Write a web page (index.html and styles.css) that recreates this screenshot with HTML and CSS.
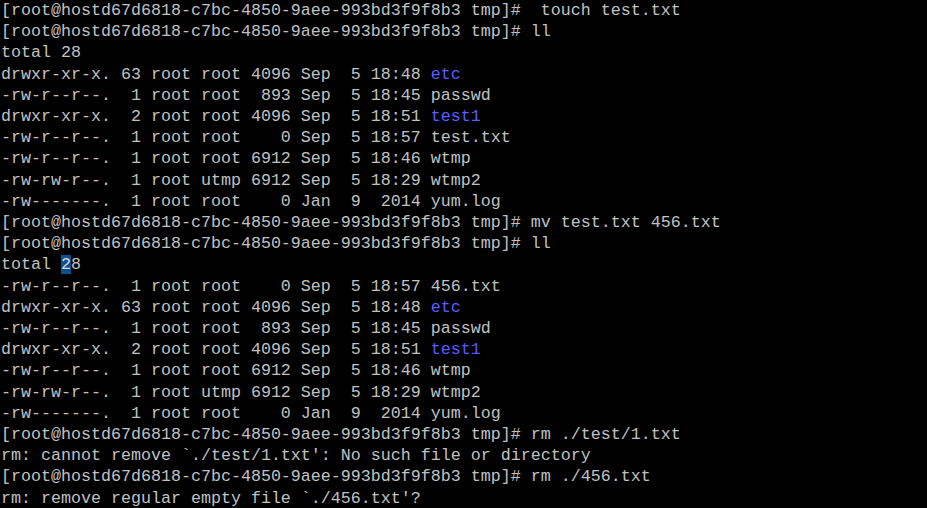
FILE: index.html
```html
<!DOCTYPE html>
<html>
<head>
<meta charset="utf-8">
<link rel="stylesheet" href="styles.css">
</head>
<body>
<pre class="term">[root@hostd67d6818-c7bc-4850-9aee-993bd3f9f8b3 tmp]#  touch test.txt
[root@hostd67d6818-c7bc-4850-9aee-993bd3f9f8b3 tmp]# ll
total 28
drwxr-xr-x. 63 root root 4096 Sep  5 18:48 <span class="dir">etc</span>
-rw-r--r--.  1 root root  893 Sep  5 18:45 passwd
drwxr-xr-x.  2 root root 4096 Sep  5 18:51 <span class="dir">test1</span>
-rw-r--r--.  1 root root    0 Sep  5 18:57 test.txt
-rw-r--r--.  1 root root 6912 Sep  5 18:46 wtmp
-rw-rw-r--.  1 root utmp 6912 Sep  5 18:29 wtmp2
-rw-------.  1 root root    0 Jan  9  2014 yum.log
[root@hostd67d6818-c7bc-4850-9aee-993bd3f9f8b3 tmp]# mv test.txt 456.txt
[root@hostd67d6818-c7bc-4850-9aee-993bd3f9f8b3 tmp]# ll
total <span class="sel">2</span>8
-rw-r--r--.  1 root root    0 Sep  5 18:57 456.txt
drwxr-xr-x. 63 root root 4096 Sep  5 18:48 <span class="dir">etc</span>
-rw-r--r--.  1 root root  893 Sep  5 18:45 passwd
drwxr-xr-x.  2 root root 4096 Sep  5 18:51 <span class="dir">test1</span>
-rw-r--r--.  1 root root 6912 Sep  5 18:46 wtmp
-rw-rw-r--.  1 root utmp 6912 Sep  5 18:29 wtmp2
-rw-------.  1 root root    0 Jan  9  2014 yum.log
[root@hostd67d6818-c7bc-4850-9aee-993bd3f9f8b3 tmp]# rm ./test/1.txt
rm: cannot remove `./test/1.txt': No such file or directory
[root@hostd67d6818-c7bc-4850-9aee-993bd3f9f8b3 tmp]# rm ./456.txt
rm: remove regular empty file `./456.txt'?</pre>
</body>
</html>
```
FILE: styles.css
```css
html, body {
  margin: 0;
  padding: 0;
  background: #000;
  overflow: hidden;
}
.term {
  margin: 0;
  padding: 0 0 0 1px;
  font-family: "Liberation Mono", monospace;
  font-size: 16.67px;
  line-height: 21.2px;
  color: #c0c0c0;
  white-space: pre;
}
.dir {
  color: #5c5cff;
}
.sel {
  background: #0a4f8f;
  color: #d8d8d8;
}
```
